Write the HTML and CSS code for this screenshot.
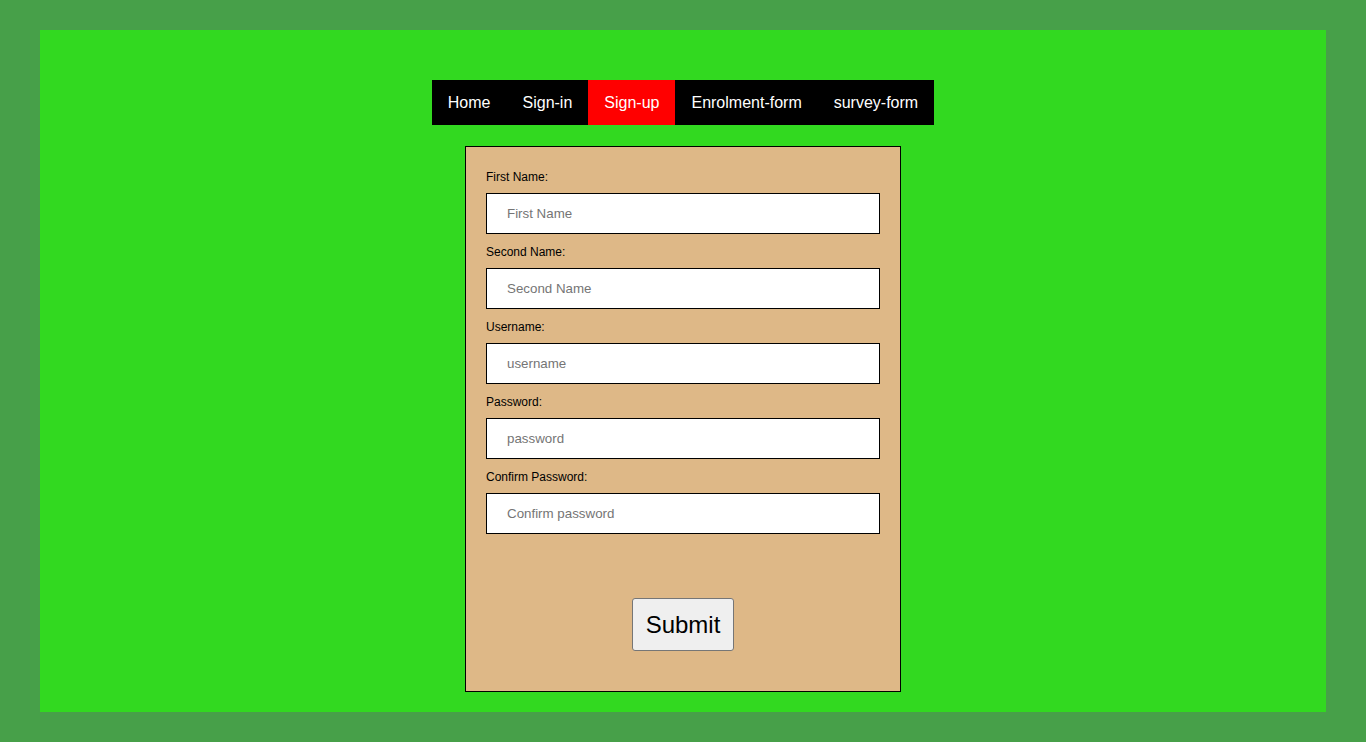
FILE: index.html
```html
<!DOCTYPE html>
<html lang="en">
<head>
<meta charset="utf-8">
<title>Sign-up</title>
<link rel="stylesheet" href="styles.css">
</head>
<body>
<div class="page">
  <nav class="nav">
    <a class="nav-item" href="#">Home</a>
    <a class="nav-item" href="#">Sign-in</a>
    <a class="nav-item active" href="#">Sign-up</a>
    <a class="nav-item" href="#">Enrolment-form</a>
    <a class="nav-item" href="#">survey-form</a>
  </nav>
  <form class="signup">
    <label class="field-label">First Name:</label>
    <input class="field-input" type="text" placeholder="First Name">
    <label class="field-label">Second Name:</label>
    <input class="field-input" type="text" placeholder="Second Name">
    <label class="field-label">Username:</label>
    <input class="field-input" type="text" placeholder="username">
    <label class="field-label">Password:</label>
    <input class="field-input" type="password" placeholder="password">
    <label class="field-label">Confirm Password:</label>
    <input class="field-input" type="password" placeholder="Confirm password">
    <button class="submit" type="button">Submit</button>
  </form>
</div>
</body>
</html>
```

FILE: styles.css
```css
html, body {
  margin: 0;
  padding: 0;
}
body {
  background: #47a049;
  padding: 30px 40px;
  font-family: "Liberation Sans", Arial, sans-serif;
}
.page {
  background: #32d920;
  height: 682px;
  display: flex;
  flex-direction: column;
  align-items: center;
  box-sizing: border-box;
  padding-top: 50px;
}
.nav {
  display: flex;
  background: #000;
}
.nav-item {
  color: #fff;
  text-decoration: none;
  font-size: 16px;
  line-height: 17px;
  padding: 14px 16px;
}
.nav-item.active {
  background: #ff0000;
}
.signup {
  margin-top: 21px;
  width: 436px;
  box-sizing: border-box;
  border: 1px solid #000;
  background: #deb887;
  padding: 23px 20px 40px;
  display: flex;
  flex-direction: column;
}
.field-label {
  display: block;
  font-size: 12px;
  line-height: 14px;
  color: #000;
  margin-bottom: 9px;
}
.field-input {
  display: block;
  width: 100%;
  box-sizing: border-box;
  border: 1px solid #000;
  border-radius: 0;
  background: #fff;
  font-family: "Liberation Sans", Arial, sans-serif;
  font-size: 13.333px;
  line-height: 15px;
  height: 41px;
  padding: 12px 20px;
  margin: 0 0 11px;
  outline: none;
}
.field-input::placeholder {
  color: #757575;
}
.submit {
  align-self: center;
  margin-top: 53px;
  font-family: "Liberation Sans", Arial, sans-serif;
  font-size: 24px;
  line-height: 27px;
  padding: 12px 13px;
  background: #efefef;
  color: #000;
  border: 1px solid #767676;
  border-radius: 3px;
}
```
